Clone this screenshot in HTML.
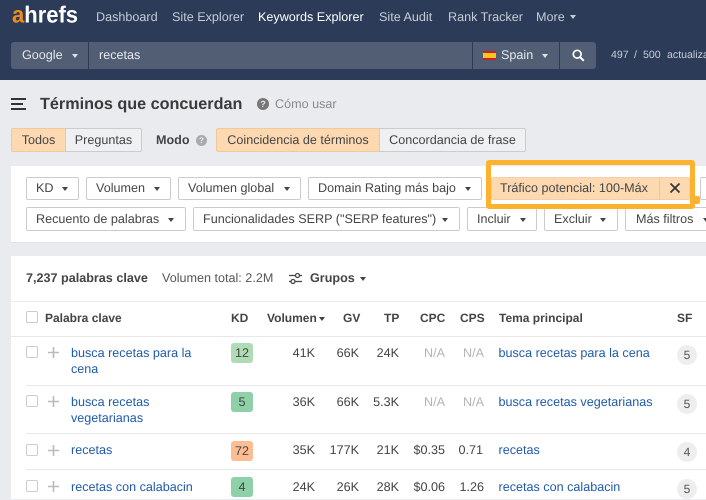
<!DOCTYPE html>
<html><head><meta charset="utf-8">
<style>
html,body{margin:0;padding:0}
body{width:706px;height:499px;overflow:hidden;position:relative;background:#e9ebee;font-family:"Liberation Sans",sans-serif;font-size:12.6px;color:#444;text-rendering:geometricPrecision}
.t{position:absolute;white-space:nowrap;line-height:16px}
.b{position:absolute;box-sizing:border-box}
.r{text-align:right}
.btn{position:absolute;box-sizing:border-box;border:1px solid #ccc;border-radius:2px;background:#fff;height:23px;line-height:21px;padding-left:9px;white-space:nowrap;color:#444;overflow:hidden}
.tog{position:absolute;box-sizing:border-box;border:1px solid #ccc;height:24px;line-height:22px;text-align:center;white-space:nowrap;color:#444;background:#eef0f2;border-radius:2px}
.on{background:#fdd9b2;border-color:#f4c99a}
.arr{position:absolute;width:0;height:0;border-left:3.5px solid transparent;border-right:3.5px solid transparent;border-top:4px solid #444}
.w{border-top-color:#dfe3e8}
.nav{color:#c6ccd6}
.hd{font-weight:bold;color:#444;font-size:12px}
a,.l{color:#1f5aa8}
.cb{position:absolute;box-sizing:border-box;width:12px;height:12px;border:1px solid #ccc;border-radius:2px;background:#fff}
.ln{position:absolute;left:26px;right:0;height:1px;background:#e8e8e8}
.kd{position:absolute;left:231px;width:22px;height:20px;border-radius:3px;text-align:center;line-height:20px;color:#444}
.sf{position:absolute;left:677px;width:20px;height:20px;border-radius:50%;background:#eee;text-align:center;line-height:21px;color:#555;font-size:12px}
.g{color:#b4b4b4}
.plus{position:absolute;left:48px;width:11px;height:11px}
</style></head><body>

<!-- header -->
<div class="b" style="left:0;top:0;width:706px;height:80px;background:#2c3c58"></div>
<div class="t" style="left:12px;top:4px;font-size:22px;line-height:24px;font-weight:bold;color:#fff;transform:scaleY(1.06);transform-origin:0 100%"><span style="color:#f58a1f">a</span>hrefs</div>
<div class="t nav" style="left:96px;top:9px">Dashboard</div>
<div class="t nav" style="left:172px;top:9px">Site Explorer</div>
<div class="t" style="left:258px;top:9px;color:#fff">Keywords Explorer</div>
<div class="t nav" style="left:379px;top:9px">Site Audit</div>
<div class="t nav" style="left:448px;top:9px">Rank Tracker</div>
<div class="t nav" style="left:536px;top:9px">More</div>
<div class="arr" style="left:570px;top:15px;border-top-color:#c6ccd6"></div>

<div class="b" style="left:11px;top:42px;width:77px;height:27px;background:#515e73;border-radius:3px 0 0 3px"></div>
<div class="b" style="left:89px;top:42px;width:383px;height:27px;background:#515e73"></div>
<div class="b" style="left:473px;top:42px;width:86px;height:27px;background:#515e73"></div>
<div class="b" style="left:560px;top:42px;width:36px;height:27px;background:#515e73;border-radius:0 3px 3px 0"></div>
<div class="t" style="left:22px;top:47px;color:#e6e9ee">Google</div>
<div class="arr w" style="left:71.5px;top:54px"></div>
<div class="t" style="left:99px;top:47px;color:#e6e9ee">recetas</div>
<div class="b" style="left:483px;top:51px;width:13px;height:9px;background:linear-gradient(#c8202c 0 2.2px,#fac71c 2.2px 6.8px,#c8202c 6.8px)"></div>
<div class="t" style="left:501px;top:47px;color:#e6e9ee">Spain</div>
<div class="arr w" style="left:542px;top:54px"></div>
<svg class="b" style="left:572px;top:49px" width="13" height="13" viewBox="0 0 13 13"><circle cx="5.2" cy="5.2" r="3.9" fill="none" stroke="#fff" stroke-width="1.7"/><path d="M8 8l3.8 3.8" stroke="#fff" stroke-width="2" fill="none"/></svg>
<div class="t" style="left:611px;top:47px;color:#c6ccd6;font-size:10.6px">497</div>
<div class="t" style="left:634px;top:47px;color:#c6ccd6;font-size:10.6px">/</div>
<div class="t" style="left:643px;top:47px;color:#c6ccd6;font-size:10.6px">500</div>
<div class="t" style="left:667px;top:47px;color:#c6ccd6;font-size:10.6px">actualizaciones</div>

<!-- title -->
<div class="b" style="left:11px;top:98px;width:15px;height:1.5px;background:#333"></div>
<div class="b" style="left:11px;top:103px;width:12px;height:1.5px;background:#333"></div>
<div class="b" style="left:11px;top:108px;width:15px;height:1.5px;background:#333"></div>
<div class="t" style="left:40px;top:95px;font-size:16.2px;line-height:18px;font-weight:bold;color:#3a3a3a">Términos que concuerdan</div>
<div class="b" style="left:257px;top:98px;width:12px;height:12px;border-radius:50%;background:#777;color:#e9ebee;font-size:9px;line-height:12px;text-align:center;font-weight:bold">?</div>
<div class="t" style="left:275px;top:96px;color:#8a8a8a">Cómo usar</div>

<!-- toggles -->
<div class="tog on" style="left:11px;top:128px;width:55px;border-radius:2px 0 0 2px">Todos</div>
<div class="tog" style="left:65px;top:128px;width:77px;border-radius:0 2px 2px 0">Preguntas</div>
<div class="t" style="left:156px;top:132px;font-weight:bold;color:#444">Modo</div>
<div class="b" style="left:196px;top:135px;width:11px;height:11px;border-radius:50%;background:#aaa;color:#e9ebee;font-size:8px;line-height:11px;text-align:center;font-weight:bold">?</div>
<div class="tog on" style="left:216px;top:128px;width:164px;border-radius:2px 0 0 2px">Coincidencia de términos</div>
<div class="tog" style="left:379px;top:128px;width:147px;border-radius:0 2px 2px 0">Concordancia de frase</div>

<!-- filters -->
<div class="b" style="left:11px;top:166px;width:695px;height:77px;background:#fff;border-bottom:1px solid #e2e3e6"></div>
<div class="btn" style="left:26px;top:177px;width:53px">KD</div><div class="arr" style="left:62px;top:187px"></div>
<div class="btn" style="left:86px;top:177px;width:85px">Volumen</div><div class="arr" style="left:154px;top:187px"></div>
<div class="btn" style="left:178px;top:177px;width:123px">Volumen global</div><div class="arr" style="left:284px;top:187px"></div>
<div class="btn" style="left:308px;top:177px;width:174px">Domain Rating más bajo</div><div class="arr" style="left:465px;top:187px"></div>
<div class="btn on" style="left:491px;top:177px;width:199px;border-color:#f4cfa5;padding-left:8px">Tráfico potencial: 100-Máx</div>
<div class="b" style="left:659px;top:177px;width:1px;height:23px;background:#f0c698"></div>
<svg class="b" style="left:669px;top:182px" width="12" height="12" viewBox="0 0 12 12"><path d="M1.5 1.5l9 9M10.5 1.5l-9 9" stroke="#333" stroke-width="1.7" fill="none"/></svg>
<div class="btn" style="left:700px;top:177px;width:30px"></div>

<div class="btn" style="left:26px;top:207px;width:160px;height:24px;line-height:22px">Recuento de palabras</div><div class="arr" style="left:168px;top:218px"></div>
<div class="btn" style="left:193px;top:207px;width:267px;height:24px;line-height:22px">Funcionalidades SERP ("SERP features")</div><div class="arr" style="left:442px;top:218px"></div>
<div class="btn" style="left:467px;top:207px;width:70px;height:24px;line-height:22px">Incluir</div><div class="arr" style="left:520px;top:218px"></div>
<div class="btn" style="left:544px;top:207px;width:74px;height:24px;line-height:22px">Excluir</div><div class="arr" style="left:600px;top:218px"></div>
<div class="btn" style="left:625px;top:207px;width:100px;height:24px;line-height:22px;padding-left:10px">Más filtros</div><div class="arr" style="left:703px;top:218px"></div>

<!-- highlight -->
<div class="b" style="left:486px;top:160px;width:209px;height:49px;border:5px solid #fdb22f;border-radius:3px"></div>
<div class="b" style="left:690px;top:196px;width:10px;height:8px;background:#fdb22f;border-radius:0 2px 2px 0"></div>

<!-- table -->
<div class="b" style="left:11px;top:256px;width:695px;height:243px;background:#fff"></div>
<div class="t" style="left:26px;top:270px;font-weight:bold;color:#444">7,237 palabras clave</div>
<div class="t" style="left:162px;top:270px;color:#555">Volumen total: 2.2M</div>
<svg class="b" style="left:288px;top:272px" width="15" height="13" viewBox="0 0 15 13"><path d="M1 3.5h13M1 9.5h13" stroke="#444" stroke-width="1.3"/><circle cx="9.5" cy="3.5" r="2" fill="#fff" stroke="#444" stroke-width="1.3"/><circle cx="5" cy="9.5" r="2" fill="#fff" stroke="#444" stroke-width="1.3"/></svg>
<div class="t" style="left:310px;top:270px;font-weight:bold;color:#444">Grupos</div>
<div class="arr" style="left:360px;top:277px"></div>
<div class="b" style="left:11px;top:301px;width:695px;height:1px;background:#ececec"></div>

<div class="cb" style="left:26px;top:311px"></div>
<div class="t hd" style="left:45px;top:310px">Palabra clave</div>
<div class="t hd" style="left:231px;top:310px">KD</div>
<div class="t hd" style="left:267px;top:310px">Volumen</div>
<div class="arr" style="left:319px;top:317px"></div>
<div class="t hd" style="left:343px;top:310px">GV</div>
<div class="t hd" style="left:384px;top:310px">TP</div>
<div class="t hd" style="left:420px;top:310px">CPC</div>
<div class="t hd" style="left:460px;top:310px">CPS</div>
<div class="t hd" style="left:499px;top:310px">Tema principal</div>
<div class="t hd" style="left:677px;top:310px">SF</div>
<div class="b" style="left:11px;top:336px;width:695px;height:1px;background:#e8e8e8"></div>

<!-- row 1 -->
<div class="cb" style="left:26px;top:346px"></div>
<svg class="plus" style="top:347px" viewBox="0 0 11 11"><path d="M5.5 0v11M0 5.5h11" stroke="#bbb" stroke-width="1.6"/></svg>
<div class="t l" style="left:71px;top:345px">busca recetas para la<br>cena</div>
<div class="kd" style="top:343px;background:#b0dcb5">12</div>
<div class="t r" style="right:391px;top:345px">41K</div>
<div class="t r" style="right:347px;top:345px">66K</div>
<div class="t r" style="right:307px;top:345px">24K</div>
<div class="t r g" style="right:261px;top:345px">N/A</div>
<div class="t r g" style="right:222px;top:345px">N/A</div>
<div class="t l" style="left:498.5px;top:345px">busca recetas para la cena</div>
<div class="sf" style="top:345px">5</div>
<div class="ln" style="top:385px"></div>

<!-- row 2 -->
<div class="cb" style="left:26px;top:395px"></div>
<svg class="plus" style="top:396px" viewBox="0 0 11 11"><path d="M5.5 0v11M0 5.5h11" stroke="#bbb" stroke-width="1.6"/></svg>
<div class="t l" style="left:71px;top:394px">busca recetas<br>vegetarianas</div>
<div class="kd" style="top:392px;background:#8ed1a8">5</div>
<div class="t r" style="right:391px;top:394px">36K</div>
<div class="t r" style="right:347px;top:394px">66K</div>
<div class="t r" style="right:307px;top:394px">5.3K</div>
<div class="t r g" style="right:261px;top:394px">N/A</div>
<div class="t r g" style="right:222px;top:394px">N/A</div>
<div class="t l" style="left:498.5px;top:394px">busca recetas vegetarianas</div>
<div class="sf" style="top:394px">5</div>
<div class="ln" style="top:433px"></div>

<!-- row 3 -->
<div class="cb" style="left:26px;top:444px"></div>
<svg class="plus" style="top:445px" viewBox="0 0 11 11"><path d="M5.5 0v11M0 5.5h11" stroke="#bbb" stroke-width="1.6"/></svg>
<div class="t l" style="left:71px;top:442px">recetas</div>
<div class="kd" style="top:441px;background:#fdbd92">72</div>
<div class="t r" style="right:391px;top:442px">35K</div>
<div class="t r" style="right:347px;top:442px">177K</div>
<div class="t r" style="right:307px;top:442px">21K</div>
<div class="t r" style="right:261px;top:442px">$0.35</div>
<div class="t r" style="right:223px;top:442px">0.71</div>
<div class="t l" style="left:498.5px;top:442px">recetas</div>
<div class="sf" style="top:442px">4</div>
<div class="ln" style="top:469px"></div>

<!-- row 4 -->
<div class="cb" style="left:26px;top:480px"></div>
<svg class="plus" style="top:481px" viewBox="0 0 11 11"><path d="M5.5 0v11M0 5.5h11" stroke="#bbb" stroke-width="1.6"/></svg>
<div class="t l" style="left:71px;top:479px">recetas con calabacin</div>
<div class="kd" style="top:477px;background:#8ed1a8">4</div>
<div class="t r" style="right:391px;top:479px">24K</div>
<div class="t r" style="right:347px;top:479px">26K</div>
<div class="t r" style="right:307px;top:479px">28K</div>
<div class="t r" style="right:261px;top:479px">$0.06</div>
<div class="t r" style="right:222px;top:479px">1.26</div>
<div class="t l" style="left:498.5px;top:479px">recetas con calabacin</div>
<div class="sf" style="top:479px">5</div>

</body></html>
